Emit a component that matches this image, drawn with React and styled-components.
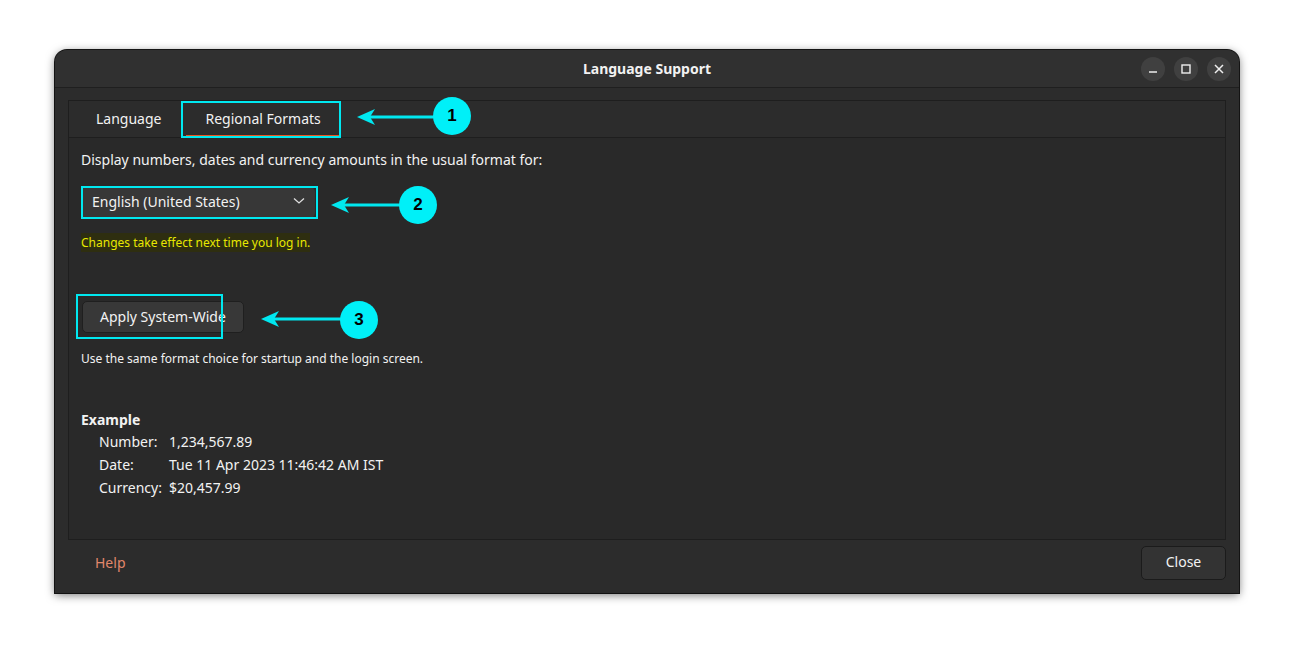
import React from "react";
import styled, { createGlobalStyle } from "styled-components";

const Global = createGlobalStyle`
  html, body { margin: 0; background: #fff; }
  body { font-family: "Noto Sans", "Open Sans", sans-serif; }
`;

const Page = styled.div`
  position: relative;
  width: 1294px;
  height: 653px;
  padding: 50px 0 0 55px;
  box-sizing: border-box;
`;

const Window = styled.div`
  width: 1184px;
  height: 543px;
  background: #2c2c2c;
  border-radius: 12px 12px 0 0;
  box-shadow: 0 2px 10px rgba(0,0,0,0.55), 0 0 0 1px #1a1a1a;
  display: flex;
  flex-direction: column;
  color: #f2f2f2;
  overflow: hidden;
`;

const TitleBar = styled.div`
  height: 37px;
  background: #303030;
  border-bottom: 1px solid #1f1f1f;
  display: flex;
  align-items: center;
  justify-content: center;
  position: relative;
  font-weight: 700;
  font-size: 14px;
`;

const Controls = styled.div`
  position: absolute;
  right: 8px;
  top: 7px;
  display: flex;
  gap: 9px;
`;

const CtrlBtn = styled.div`
  width: 24px;
  height: 24px;
  border-radius: 50%;
  background: #404040;
  display: flex;
  align-items: center;
  justify-content: center;
`;

const Notebook = styled.div`
  margin: 12px 13px 0;
  height: 440px;
  border: 1px solid #1e1e1e;
  background: #292929;
  display: flex;
  flex-direction: column;
  box-sizing: border-box;
`;

const Tabs = styled.div`
  height: 36px;
  display: flex;
  border-bottom: 1px solid #1e1e1e;
  padding-left: 8px;
  background: #2c2c2c;
`;

const Tab = styled.div`
  padding: 0 19px 2px;
  display: flex;
  align-items: center;
  font-size: 14px;
  margin-right: 6px;
  box-shadow: ${p => (p.$active ? "inset 0 -2px 0 #e95420" : "none")};
`;

const Content = styled.div`
  padding: 12px 12px;
  display: flex;
  flex-direction: column;
  align-items: flex-start;
  font-size: 14px;
`;

const Combo = styled.div`
  margin-top: 18px;
  width: 234px;
  height: 31px;
  background: #373737;
  border-radius: 5px;
  display: flex;
  align-items: center;
  justify-content: space-between;
  padding: 0 10px 3px 11px;
  box-sizing: border-box;
`;

const Warning = styled.div`
  margin-top: 15px;
  font-size: 12px;
  color: #e8e800;
  background: #2e2e10;
  padding: 1px 0;
`;

const Button = styled.div`
  margin-top: 49px;
  height: 32px;
  padding: 0 17px 2px;
  border-radius: 5px;
  background: #383838;
  border: 1px solid #1f1f1f;
  display: flex;
  align-items: center;
  box-sizing: border-box;
  margin-left: 1px;
`;

const Caption = styled.div`
  margin-top: 17px;
  font-size: 12px;
`;

const ExampleTitle = styled.div`
  margin-top: 43px;
  font-weight: 700;
`;

const ExampleGrid = styled.div`
  margin-top: 3px;
  margin-left: 18px;
  display: grid;
  grid-template-columns: 70px auto;
  row-gap: 4px;
  line-height: 19px;
`;

const Footer = styled.div`
  flex: 1;
  display: flex;
  align-items: center;
  justify-content: space-between;
  padding: 0 13px 8px 40px;
`;

const Help = styled.div`
  color: #e2876b;
  font-size: 14px;
`;

const CloseBtn = styled.div`
  width: 85px;
  height: 34px;
  border: 1px solid #1b1b1b;
  background: #333;
  border-radius: 5px;
  display: flex;
  align-items: center;
  justify-content: center;
  font-size: 14px;
  box-sizing: border-box;
  padding-bottom: 2px;
`;

const Highlight = styled.div`
  position: absolute;
  border: 2px solid #00e8f0;
  box-sizing: border-box;
`;

const Badge = styled.div`
  position: absolute;
  width: 38px;
  height: 38px;
  border-radius: 50%;
  background: #00f0f8;
  color: #000;
  font-weight: 700;
  font-size: 17px;
  display: flex;
  align-items: center;
  justify-content: center;
  font-family: "Liberation Sans", sans-serif;
`;

const Arrow = ({ x1, x2, y }) => (
  <svg style={{ position: "absolute", left: x2, top: y - 8, overflow: "visible" }} width={x1 - x2} height="16">
    <line x1="10" y1="8" x2={x1 - x2} y2="8" stroke="#00e8f0" strokeWidth="3" />
    <path d="M0 8 L18 0 L13 8 L18 16 Z" fill="#00e8f0" />
  </svg>
);

export default function App() {
  return (
    <Page>
      <Global />
      <Window>
        <TitleBar>
          Language Support
          <Controls>
            <CtrlBtn>
              <svg width="10" height="10"><line x1="1" y1="8" x2="9" y2="8" stroke="#eee" strokeWidth="1.5" /></svg>
            </CtrlBtn>
            <CtrlBtn>
              <svg width="10" height="10"><rect x="1" y="1" width="8" height="8" fill="none" stroke="#eee" strokeWidth="1.4" /></svg>
            </CtrlBtn>
            <CtrlBtn>
              <svg width="10" height="10"><path d="M1 1 L9 9 M9 1 L1 9" stroke="#eee" strokeWidth="1.5" /></svg>
            </CtrlBtn>
          </Controls>
        </TitleBar>
        <Notebook>
          <Tabs>
            <Tab>Language</Tab>
            <Tab $active>Regional Formats</Tab>
          </Tabs>
          <Content>
            <div>Display numbers, dates and currency amounts in the usual format for:</div>
            <Combo>
              <span>English (United States)</span>
              <svg width="12" height="8"><path d="M1 1.5 L6 6 L11 1.5" fill="none" stroke="#ddd" strokeWidth="1.3" /></svg>
            </Combo>
            <Warning>Changes take effect next time you log in.</Warning>
            <Button>Apply System-Wide</Button>
            <Caption>Use the same format choice for startup and the login screen.</Caption>
            <ExampleTitle>Example</ExampleTitle>
            <ExampleGrid>
              <span>Number:</span><span>1,234,567.89</span>
              <span>Date:</span><span>Tue 11 Apr 2023 11:46:42 AM IST</span>
              <span>Currency:</span><span>$20,457.99</span>
            </ExampleGrid>
          </Content>
        </Notebook>
        <Footer>
          <Help>Help</Help>
          <CloseBtn>Close</CloseBtn>
        </Footer>
      </Window>

      <Highlight style={{ left: 181, top: 101, width: 160, height: 37 }} />
      <Arrow x1={434} x2={357} y={117} />
      <Badge style={{ left: 433, top: 97 }}>1</Badge>

      <Highlight style={{ left: 81, top: 186, width: 237, height: 33 }} />
      <Arrow x1={400} x2={331} y={205} />
      <Badge style={{ left: 399, top: 186 }}>2</Badge>

      <Highlight style={{ left: 76, top: 294, width: 147, height: 45 }} />
      <Arrow x1={341} x2={261} y={319} />
      <Badge style={{ left: 340, top: 301 }}>3</Badge>
    </Page>
  );
}
